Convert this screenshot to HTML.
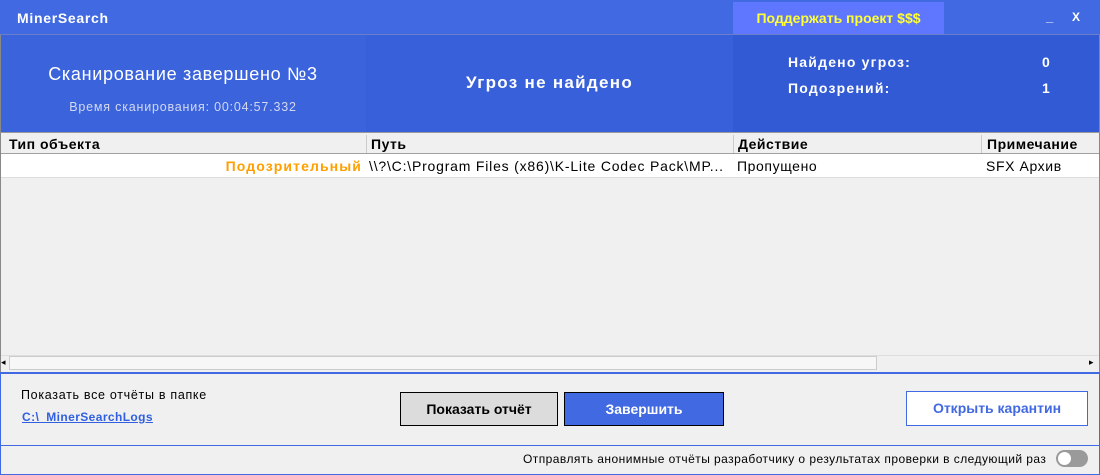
<!DOCTYPE html>
<html><head><meta charset="utf-8"><style>
*{margin:0;padding:0;box-sizing:border-box}
body{width:1100px;height:475px;background:#f0f0f0;font-family:"Liberation Sans","DejaVu Sans",sans-serif;position:relative;overflow:hidden}
.a{position:absolute;white-space:nowrap}
.b{font-weight:bold}
</style></head><body>
<div class="a" style="left:0;top:0;width:1100px;height:35px;background:#4169e1;border-bottom:1px solid #6a7fc8"></div>
<div class="a b" style="left:17px;top:10px;color:#fff;font-size:14px;letter-spacing:0.7px">MinerSearch</div>
<div class="a b" style="left:733px;top:2px;width:211px;height:32px;background:#5f76ff;color:#ffff33;font-size:14px;line-height:33px;text-align:center">Поддержать проект $$$</div>
<div class="a b" style="left:1046px;top:9px;color:#fff;font-size:13px">_</div>
<div class="a b" style="left:1072px;top:10px;color:#fff;font-size:12px">X</div>
<div class="a" style="left:0;top:35px;width:1100px;height:97px;background:#3a63dc;border-left:1px solid #888;border-right:1px solid #888"></div>
<div class="a" style="left:366px;top:35px;width:367px;height:97px;background:#3760da"></div>
<div class="a" style="left:733px;top:35px;width:366px;height:97px;background:#315ad4"></div>
<div class="a" style="left:0;top:64px;width:366px;text-align:center;color:#fff;font-size:18px;letter-spacing:0.7px">Сканирование завершено №3</div>
<div class="a" style="left:0;top:100px;width:366px;text-align:center;color:#d4d8ee;font-size:12.5px;letter-spacing:0.8px">Время сканирования: 00:04:57.332</div>
<div class="a b" style="left:366px;top:73px;width:367px;text-align:center;color:#fff;font-size:17px;letter-spacing:1.3px">Угроз не найдено</div>
<div class="a b" style="left:788px;top:54px;color:#fff;font-size:14px;letter-spacing:1.2px">Найдено угроз:</div>
<div class="a b" style="left:788px;top:80px;color:#fff;font-size:14px;letter-spacing:1.2px">Подозрений:</div>
<div class="a b" style="left:1042px;top:54px;color:#fff;font-size:14px">0</div>
<div class="a b" style="left:1042px;top:80px;color:#fff;font-size:14px">1</div>
<div class="a" style="left:0;top:132px;width:1100px;height:243px;border-left:1px solid #888;border-right:1px solid #888;border-top:1px solid #999"></div>
<div class="a" style="left:1px;top:133px;width:1098px;height:21px;background:#f0f0f0;border-bottom:1px solid #a0a0a0"></div>
<div class="a" style="left:366px;top:135px;width:1px;height:18px;background:#ccc"></div>
<div class="a" style="left:733px;top:135px;width:1px;height:18px;background:#ccc"></div>
<div class="a" style="left:981px;top:135px;width:1px;height:18px;background:#ccc"></div>
<div class="a b" style="left:9px;top:136px;font-size:14px;color:#000;letter-spacing:0.5px">Тип объекта</div>
<div class="a b" style="left:371px;top:136px;font-size:14px;color:#000;letter-spacing:0.5px">Путь</div>
<div class="a b" style="left:738px;top:136px;font-size:14px;color:#000;letter-spacing:0.5px">Действие</div>
<div class="a b" style="left:987px;top:136px;font-size:14px;color:#000;letter-spacing:0.5px">Примечание</div>
<div class="a" style="left:1px;top:154px;width:1098px;height:24px;background:#fff;border-bottom:1px solid #ddd"></div>
<div class="a b" style="left:0;top:158px;width:362px;text-align:right;color:#ffa000;font-size:14px;letter-spacing:1.1px">Подозрительный</div>
<div class="a" style="left:369px;top:158px;font-size:14px;color:#000;letter-spacing:0.8px">\\?\C:\Program Files (x86)\K-Lite Codec Pack\MP...</div>
<div class="a" style="left:737px;top:158px;font-size:14px;color:#000;letter-spacing:0.6px">Пропущено</div>
<div class="a" style="left:986px;top:158px;font-size:14px;color:#000;letter-spacing:0.6px">SFX Архив</div>
<div class="a" style="left:1px;top:355px;width:1098px;height:16px;background:#f0f0f0;border-top:1px solid #ddd"></div>
<div class="a" style="left:9px;top:356px;width:868px;height:14px;background:#f7f7f7;border:1px solid #ccc"></div>
<div class="a" style="left:1px;top:357px;font-size:9px;color:#000">◂</div>
<div class="a" style="left:1089px;top:357px;font-size:9px;color:#000">▸</div>
<div class="a" style="left:0;top:372px;width:1100px;height:103px;border:1px solid #4169e1;border-top:2px solid #4169e1"></div>
<div class="a" style="left:0;top:445px;width:1100px;height:1px;background:#4169e1"></div>
<div class="a" style="left:21px;top:388px;font-size:12.5px;color:#000;letter-spacing:0.7px">Показать все отчёты в папке</div>
<div class="a b" style="left:22px;top:410px;font-size:12px;color:#3060e0;text-decoration:underline;letter-spacing:0.4px">C:\_MinerSearchLogs</div>
<div class="a b" style="left:400px;top:392px;width:158px;height:34px;background:#dcdcdc;border:1px solid #000;text-align:center;line-height:32px;font-size:14px">Показать отчёт</div>
<div class="a b" style="left:564px;top:392px;width:160px;height:34px;background:#4169e1;border:1px solid #000;text-align:center;line-height:32px;font-size:14px;color:#fff">Завершить</div>
<div class="a b" style="left:906px;top:391px;width:182px;height:35px;background:#fff;border:1px solid #4169e1;text-align:center;line-height:33px;font-size:14px;color:#4169e1">Открыть карантин</div>
<div class="a" style="left:523px;top:452px;font-size:12px;color:#000;letter-spacing:0.45px">Отправлять анонимные отчёты разработчику о результатах проверки в следующий раз</div>
<div class="a" style="left:1056px;top:450px;width:32px;height:17px;border-radius:9px;background:#9a9a9a"></div>
<div class="a" style="left:1058px;top:452px;width:13px;height:13px;border-radius:7px;background:#fff"></div>
</body></html>
